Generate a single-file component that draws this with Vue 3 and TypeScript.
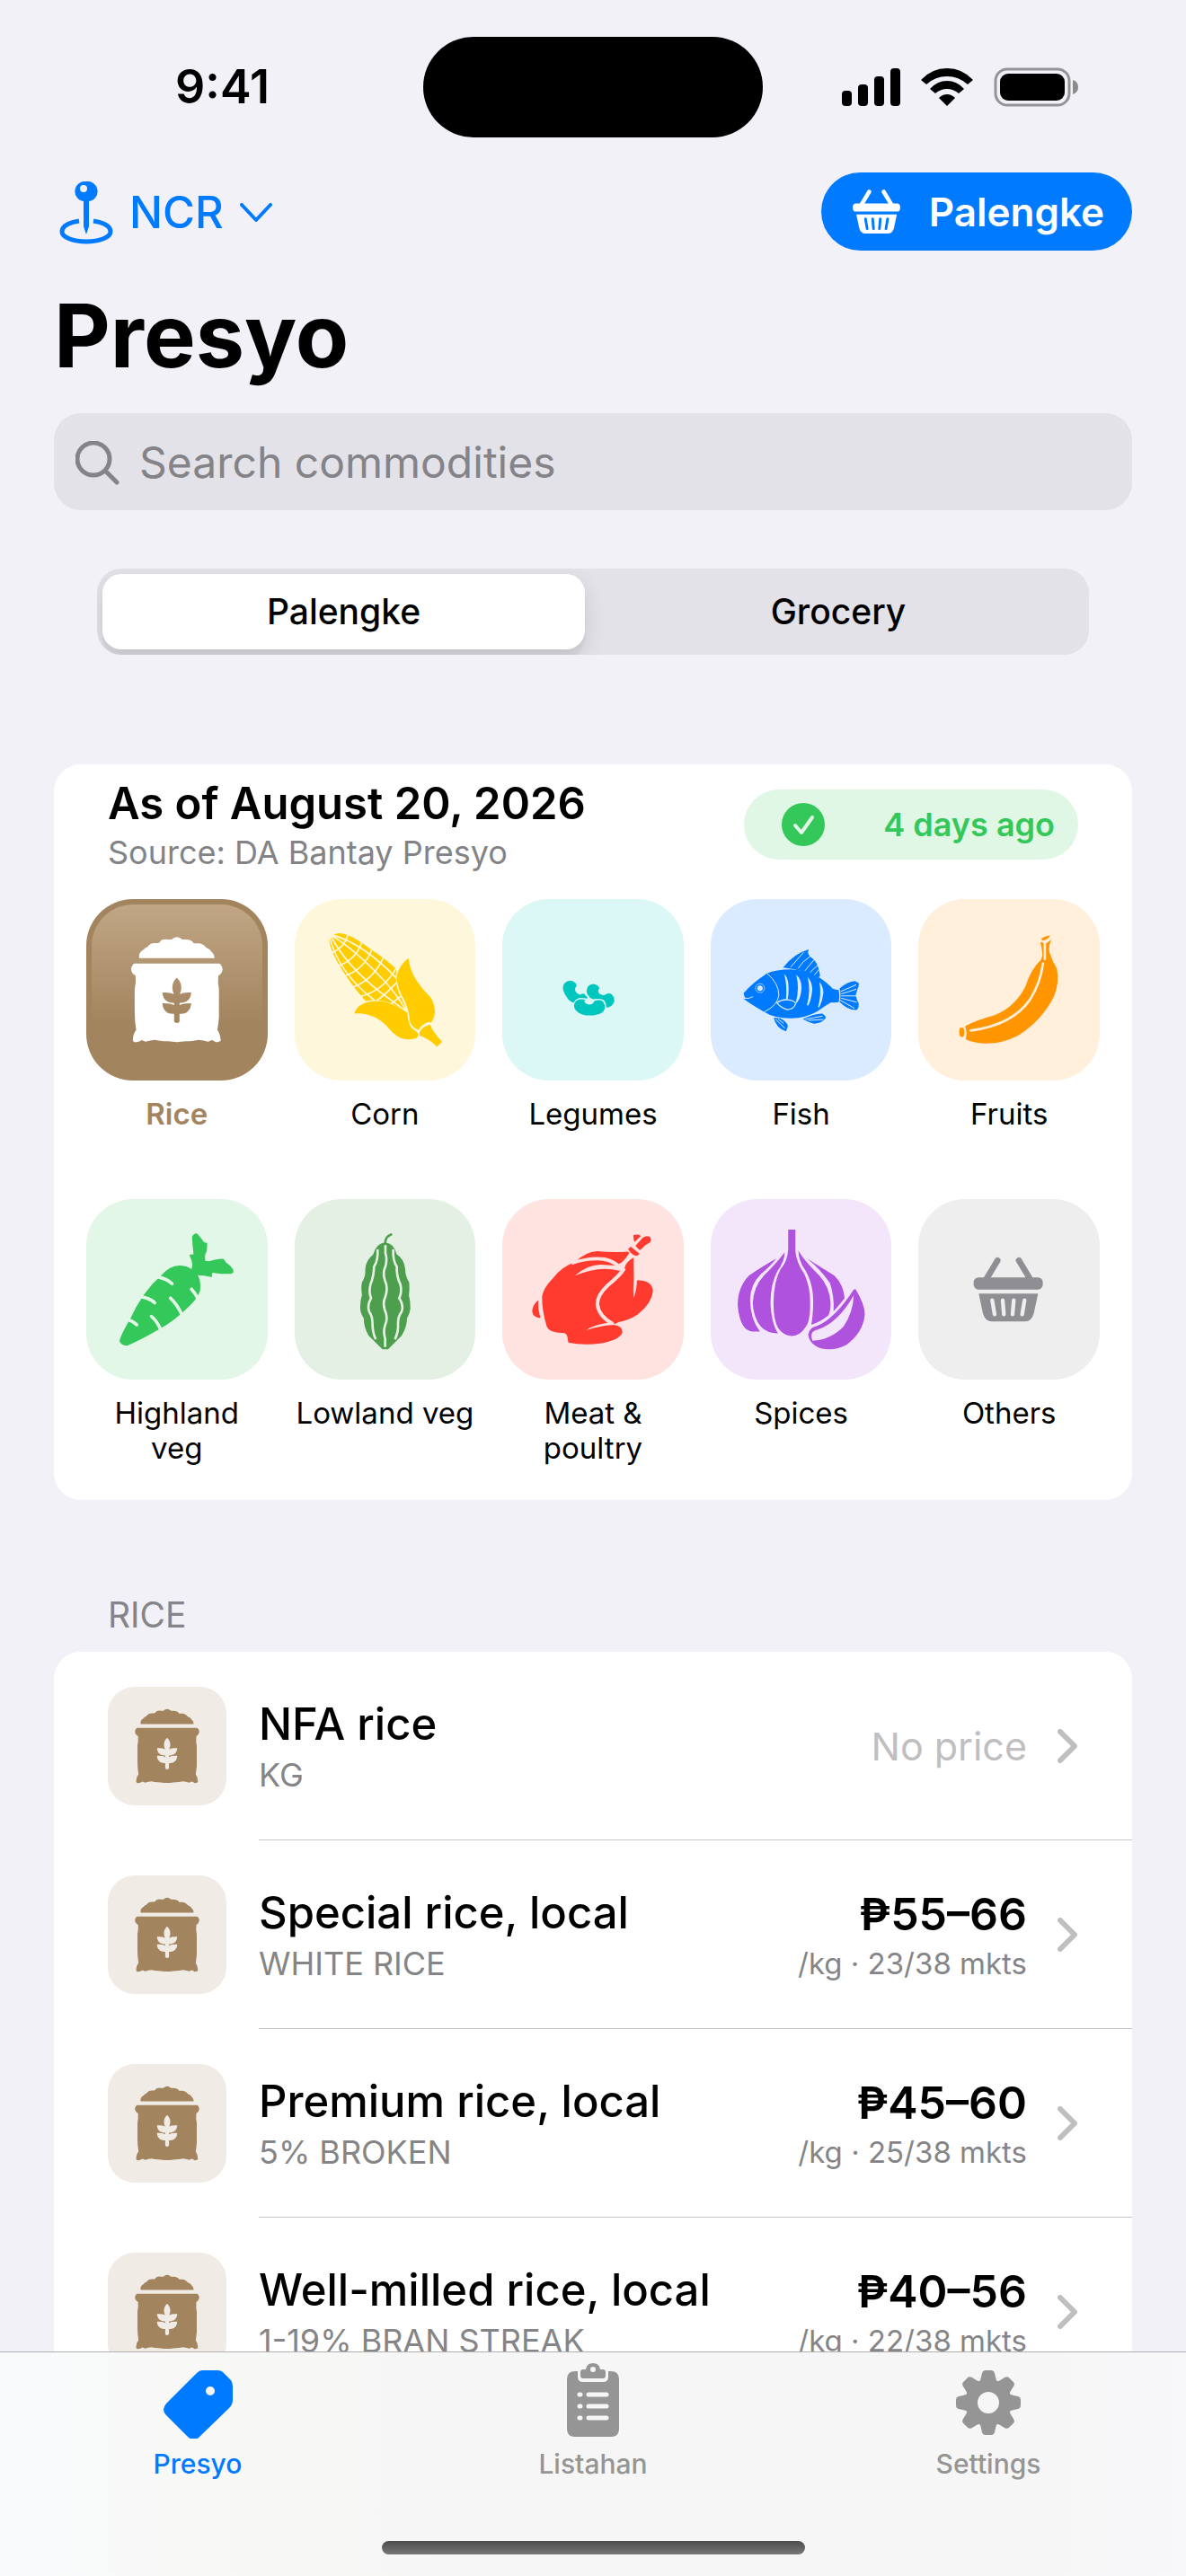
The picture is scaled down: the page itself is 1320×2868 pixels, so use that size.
<script setup lang="ts">
import { computed, ref } from 'vue'

interface Category {
  id: string
  label: string
  color: string
  tint: string
  viewBox: string
}

interface Commodity {
  name: string
  detail: string
  price?: string
  markets?: string
}

const market = ref<'palengke' | 'grocery'>('palengke')
const selected = ref('rice')
const query = ref('')

const categories: Category[] = [
  { id: 'rice', label: 'Rice', color: '#a2845e', tint: '#f0ebe5', viewBox: '48 63 606 606' },
  { id: 'corn', label: 'Corn', color: '#ffcc00', tint: '#fff7db', viewBox: '744 63 604 606' },
  { id: 'legumes', label: 'Legumes', color: '#00c7be', tint: '#dbf7f6', viewBox: '57 63 606 606' },
  { id: 'fish', label: 'Fish', color: '#007aff', tint: '#dbebff', viewBox: '753 63 604 606' },
  { id: 'fruits', label: 'Fruits', color: '#ff9500', tint: '#ffefdb', viewBox: '187 63 605 606' },
  { id: 'highland', label: 'Highland veg', color: '#34c759', tint: '#e2f7e7', viewBox: '48 75 606 603' },
  { id: 'lowland', label: 'Lowland veg', color: '#4d9e4d', tint: '#e5f0e5', viewBox: '744 75 603 603' },
  { id: 'meat', label: 'Meat & poultry', color: '#ff3b30', tint: '#ffe3e1', viewBox: '57 75 606 603' },
  { id: 'spices', label: 'Spices', color: '#af52de', tint: '#f3e6fa', viewBox: '753 75 603 603' },
  { id: 'others', label: 'Others', color: '#8e8e93', tint: '#eeeeef', viewBox: '187 75 605 603' },
]

const commodities: Commodity[] = [
  { name: 'NFA rice', detail: 'KG' },
  { name: 'Special rice, local', detail: 'WHITE RICE', price: '₱55–66', markets: '23/38' },
  { name: 'Premium rice, local', detail: '5% BROKEN', price: '₱45–60', markets: '25/38' },
  { name: 'Well-milled rice, local', detail: '1-19% BRAN STREAK', price: '₱40–56', markets: '22/38' },
]

const visible = computed(() =>
  commodities.filter((c) => c.name.toLowerCase().includes(query.value.toLowerCase())),
)

const gearTeeth = [0, 45, 90, 135, 180, 225, 270, 315]
</script>

<template>
  <div class="app">
    <svg class="defs" width="0" height="0" aria-hidden="true">
      <symbol id="sack" overflow="visible">
        <path d="M225 261V250Q228 238 240 232Q244 226 252 224Q262 210 275 210H289Q296 207 300 200Q310 197 320 198H333Q342 190 351 190Q360 190 370 198H382Q396 198 403 205L408 211H427Q441 214 450 226Q462 230 468 240Q477 248 477 261Z" />
        <path fill-rule="evenodd" d="M210 279H492Q497 279 499 285Q504 290 504 298Q503 312 490 319Q487 345 492 365V460Q490 480 487 501Q497 515 498 538L491 540Q485 543 480 541Q474 536 468 535L456 540Q440 535 424 534Q410 538 380 539Q351 544 322 539Q290 538 278 534Q262 535 246 540L234 535Q222 543 210 542L204 538Q203 515 215 501Q210 470 210 440V365Q215 340 213 319Q199 312 198 298Q198 290 203 285Q205 279 210 279ZM351 326Q366 340 366 358Q366 370 361 381Q375 374 399 376Q399 396 383 406Q372 411 360 411V418Q372 411 399 412Q399 432 383 443Q372 448 360 447V470Q360 477 351 477Q342 477 342 470V447Q330 448 319 443Q303 432 303 412Q330 411 342 418V411Q330 411 319 406Q303 396 303 376Q327 374 341 381Q336 370 336 358Q336 340 351 326Z" />
      </symbol>
      <symbol id="basket" overflow="visible">
        <path d="M452 279L414 342M523 279L561 342" fill="none" stroke="currentColor" stroke-width="20" stroke-linecap="round" />
        <rect x="372" y="336" width="231" height="40" rx="16" />
        <path d="M389 390H587L573 456Q566 483 543 483H434Q410 483 403 456Z" />
      </symbol>
    </svg>

    <div class="status">
      <span class="clock">9:41</span>
      <span class="island"></span>
      <span class="indicators">
        <svg width="65" height="42" viewBox="0 0 65 42" aria-hidden="true">
          <rect x="0" y="25" width="11" height="17" rx="4" />
          <rect x="18" y="18" width="11" height="24" rx="4" />
          <rect x="36" y="9" width="11" height="33" rx="4" />
          <rect x="54" y="0" width="11" height="42" rx="4" />
        </svg>
        <svg width="58" height="42" viewBox="0 0 58 42" aria-hidden="true">
          <path d="M0 13Q12 0 29 0T58 13L52 18Q42 9 29 9T6 18ZM10 23Q18 14 29 14T48 23L42 28Q36 23 29 23T16 28ZM20 33Q24 29 29 29T38 33L29 42Z" />
        </svg>
        <svg width="94" height="44" viewBox="0 0 94 44" aria-hidden="true">
          <rect x="2" y="2" width="82" height="40" rx="13" fill="none" stroke="#949497" stroke-width="3" />
          <rect x="7" y="7" width="72" height="30" rx="9" />
          <path d="M88 14Q94 16 94 22T88 30Z" fill="#8b8b8e" />
        </svg>
      </span>
    </div>

    <header class="top">
      <button class="region" type="button">
        <svg width="60" height="70" viewBox="0 0 60 70" aria-hidden="true">
          <path fill-rule="evenodd" d="M30 0A11 11 0 0 1 33 22V50L30 59L27 50V22A11 11 0 0 1 30 0ZM27 4A4 4 0 1 0 27 12A4 4 0 1 0 27 4Z" />
          <path d="M22 44C10 46 3 50 3 56C3 62 15 67 30 67S57 62 57 56C57 50 50 46 38 44" fill="none" stroke="currentColor" stroke-width="5" />
        </svg>
        <span>NCR</span>
        <svg width="36" height="22" viewBox="0 0 36 22" aria-hidden="true">
          <path d="M2 2L18 19L34 2" fill="none" stroke="currentColor" stroke-width="4" stroke-linecap="round" stroke-linejoin="round" />
        </svg>
      </button>
      <button class="market" type="button">
        <svg width="53" height="49" viewBox="372 268 231 215" aria-hidden="true">
          <use href="#basket" />
          <path class="slots blue" d="M434 412L442 459M469 412L473 459M506 412L502 459M542 412L534 459" />
        </svg>
        <span>Palengke</span>
      </button>
    </header>

    <h1>Presyo</h1>

    <label class="search">
      <svg width="49" height="49" viewBox="0 0 49 49" aria-hidden="true">
        <path d="M20 2A18 18 0 1 0 20 38A18 18 0 1 0 20 2M33 33L46 46" fill="none" stroke="currentColor" stroke-width="5" stroke-linecap="round" />
      </svg>
      <input v-model="query" type="text" placeholder="Search commodities" aria-label="Search commodities" />
    </label>

    <main>
      <div class="segments" role="radiogroup" aria-label="Market type">
        <label :class="{ on: market === 'palengke' }">
          <input v-model="market" type="radio" name="market" value="palengke" />Palengke
        </label>
        <label :class="{ on: market === 'grocery' }">
          <input v-model="market" type="radio" name="market" value="grocery" />Grocery
        </label>
      </div>

      <section class="card overview">
        <div class="summary">
          <div>
            <h2>As of August 20, 2026</h2>
            <p>Source: DA Bantay Presyo</p>
          </div>
          <span class="fresh">
            <svg width="48" height="48" viewBox="0 0 48 48" aria-hidden="true">
              <circle cx="24" cy="24" r="24" fill="#34c759" />
              <path d="M15 25L22 33L34 16" fill="none" stroke="#e1f7e6" stroke-width="4" stroke-linecap="round" stroke-linejoin="round" />
            </svg>
            <span>4 days ago</span>
          </span>
        </div>

        <div class="grid">
          <button
            v-for="c in categories"
            :key="c.id"
            type="button"
            class="category"
            :class="{ active: selected === c.id }"
            :style="{ '--ink': c.color, '--tint': c.tint }"
            @click="selected = c.id"
          >
            <span class="tile">
              <svg :viewBox="c.viewBox" aria-hidden="true">
                <use v-if="c.id === 'rice'" href="#sack" />

                <g v-else-if="c.id === 'corn'">
                  <path d="M858 203Q862 180 890 177Q925 176 990 225Q1050 265 1083 297Q1075 350 1100 395Q1112 415 1118 440Q1090 425 1065 412Q1020 395 980 404Q940 360 905 305Q865 245 858 203Z" />
                  <path class="cut w5" d="M868 183Q970 210 1086 330M866 185Q950 235 1050 345Q1090 390 1118 440M864 187Q915 285 1030 375L1118 440M860 192Q890 310 1010 402M921 183Q910 225 866 243M968 205Q950 265 886 288M1002 230Q975 300 910 320M1040 258Q1005 335 936 358M1084 292Q1040 370 965 388M1086 340Q1050 380 1016 404M1102 385L1065 414" />
                  <path d="M1124 261Q1127 300 1150 335Q1170 365 1200 395Q1215 425 1211 450Q1208 465 1200 476Q1185 472 1172 484Q1160 492 1158 502Q1130 490 1127 465Q1128 445 1112 405Q1085 360 1084 325Q1090 285 1124 261Z" />
                  <path d="M942 446Q955 405 1020 404Q1060 404 1120 443Q1122 480 1135 495Q1150 505 1157 514Q1157 524 1150 528Q1120 538 1095 527Q1075 518 1050 487Q1005 442 942 446Z" />
                  <path d="M1161 509Q1170 488 1196 483Q1200 500 1236 541L1219 557Q1195 532 1161 520Z" />
                </g>

                <g v-else-if="c.id === 'legumes'">
                  <path d="M260 358Q262 338 285 336Q305 340 306 354Q298 362 302 372Q308 382 318 384Q322 377 331 380L342 392V396Q325 393 315 394Q302 398 295 410Q280 405 272 390Q260 372 260 358Z" />
                  <path d="M339 372Q340 348 362 347Q380 350 382 362Q374 370 382 380Q392 386 400 384Q412 374 425 383Q434 394 432 405Q425 425 405 427Q405 408 395 400Q378 394 362 398Q350 396 347 388Q340 382 339 372Z" />
                  <path d="M297 418Q300 400 318 398Q335 398 334 402Q331 405 332 408Q336 415 348 416Q361 416 365 404Q380 398 392 404Q402 415 400 430Q393 448 375 449Q350 456 325 449Q296 440 297 418Z" />
                </g>

                <g v-else-if="c.id === 'fish'">
                  <path d="M862 378Q890 345 940 312Q970 298 1020 298Q1080 302 1120 328Q1150 350 1160 363Q1170 367 1180 367Q1185 385 1180 408Q1165 410 1155 409Q1135 420 1110 438Q1070 462 1020 462Q965 462 930 440Q890 418 862 397L868 394Q864 390 862 378Z" />
                  <path d="M994 292Q1030 245 1080 231L1077 242L1083 255Q1112 270 1118 320L1112 326Q1060 298 994 292Z" />
                  <path d="M963 460L985 462Q1010 475 1010 490L1004 506Q970 495 963 460ZM1060 464Q1100 445 1125 446Q1140 455 1136 462Q1125 478 1098 480Q1080 476 1060 464Z" />
                  <path d="M1183 362Q1210 338 1235 337L1248 345Q1248 355 1243 365L1237 385Q1240 400 1247 412Q1248 430 1240 434Q1210 435 1183 407Q1190 385 1183 362Z" />
                  <path class="cut w3" d="M942 313Q980 345 980 385Q975 420 932 440M864 395Q880 398 893 390M1020 290L1062 242M1045 294Q1060 270 1083 256M1068 302L1098 266M1085 308L1110 284M1100 316L1115 298M970 466L1000 495M978 465L995 478M1070 465L1125 455M1080 469L1128 466M1188 372L1238 350M1190 380L1238 365M1190 387H1238M1190 395L1240 408M1186 402L1232 428M980 411L1026 413M984 413L1022 423" />
                  <path class="gap" d="M998 314Q1010 325 1012 350Q1014 380 1009 400L1004 398Q1008 350 998 314ZM1038 316Q1056 330 1056 360Q1054 395 1040 410L1037 408Q1050 360 1038 316ZM1076 324Q1091 340 1092 365Q1089 400 1078 420L1074 418Q1088 370 1076 324ZM1116 340Q1129 355 1129 378Q1126 405 1115 426L1111 424Q1123 385 1116 340Z" />
                  <path class="knock" d="M973 410Q990 398 1010 400Q1030 402 1037 412Q1030 432 1008 433Q988 428 973 410Z" />
                  <circle class="knock" cx="917" cy="361" r="15" />
                  <circle class="gap" cx="917" cy="361" r="9" />
                </g>

                <g v-else-if="c.id === 'fruits'">
                  <path d="M343 488Q380 468 440 452Q510 425 545 355Q565 295 598 265L602 250Q600 225 595 208Q600 205 606 211H615L632 198Q622 220 625 240Q635 270 650 295Q660 340 640 390Q600 470 520 520Q465 548 410 546Q370 545 345 532Q352 510 343 488Z" />
                  <path class="cut w8" d="M604 278Q595 345 560 400Q500 485 362 503" />
                  <path class="cut w8" d="M610 205V264" />
                  <path d="M325 495Q332 490 338 495Q343 510 338 522Q332 528 325 520Q322 508 325 495ZM597 198Q605 187 628 185Q622 198 605 202Z" />
                </g>

                <g v-else-if="c.id === 'highland'">
                  <path d="M298 330Q325 297 360 296Q385 296 400 308Q405 295 400 278L393 260L407 258Q403 225 402 200Q410 185 420 190L437 210Q440 220 452 220Q455 245 445 262L446 280L460 282Q490 272 508 274L516 286Q530 295 540 310V320L532 324H500L470 320L468 335Q440 328 421 328Q432 345 429 380Q420 405 395 430Q340 485 290 510Q230 545 185 564Q165 565 159 548Q165 525 195 475Q235 385 298 330Z" />
                  <path class="cut w10" d="M286 334Q318 340 335 357M230 400Q262 405 277 421M186 476Q205 482 217 494M400 375Q412 388 424 410M330 405Q352 425 370 464M266 466Q284 480 299 514" />
                </g>

                <g v-else-if="c.id === 'lowland'">
                  <path d="M1045 219Q1075 222 1083 258Q1110 275 1112 310Q1113 335 1125 352Q1127 380 1124 395Q1130 415 1129 440Q1128 455 1118 472Q1118 500 1100 530L1055 575H1036L990 530Q973 500 974 472Q962 455 962 435Q962 412 968 395Q964 370 968 352Q980 335 979 310Q980 280 1005 260Q1015 222 1045 219Z" />
                  <path d="M1045 222Q1045 200 1065 193" fill="none" stroke="currentColor" stroke-width="8" stroke-linecap="round" />
                  <path class="cut w8 butt" d="M1046 228V255Q1053 275 1046 300Q1036 320 1044 345Q1056 370 1046 400Q1036 420 1044 445Q1056 470 1045 495Q1038 515 1045 540V568M1020 242Q1022 280 1008 300Q1008 330 996 360Q990 385 998 405Q984 430 992 450Q1003 465 1003 490Q1003 520 1014 542M1072 242Q1070 280 1084 300Q1082 330 1096 360Q1102 385 1092 405Q1108 430 1100 450Q1088 465 1088 490Q1090 515 1078 542" />
                </g>

                <g v-else-if="c.id === 'meat'">
                  <path d="M190 400Q195 370 225 340Q255 300 300 285Q335 250 375 248Q430 253 478 249L488 260L497 272Q494 310 505 345Q560 345 561 382Q558 420 510 460Q480 480 445 485L430 494Q460 498 459 520Q450 545 390 556Q330 565 278 554L275 535Q272 522 262 521Q215 522 206 500Q190 450 190 400Z" />
                  <path class="cut w12 butt" d="M465 305Q455 325 410 362Q375 395 375 425Q380 465 425 490" />
                  <path class="gap" d="M290 284Q345 262 400 269Q430 276 447 291Q465 283 482 254L500 268Q480 276 470 294Q465 315 448 313Q380 295 300 330Q340 294 385 293L434 296Q410 280 375 279Q330 279 290 294ZM337 512Q370 490 430 486L433 494Q390 496 337 512ZM497 270L499 310L508 345Q506 380 497 405Q494 380 497 345Z" />
                  <path d="M178 412Q175 440 185 472Q158 470 157 448Q160 425 178 412ZM496 194Q510 190 521 197L500 217Q495 210 496 194ZM527 203Q540 193 552 201Q560 215 545 222L533 230Q522 243 517 244Q505 235 503 229ZM478 240L487 233L516 256Q512 265 500 262Q488 258 478 240Z" />
                </g>

                <g v-else-if="c.id === 'spices'">
                  <path d="M1011 177H1035V250Q1040 290 1065 325Q1085 370 1084 420Q1085 480 1070 500Q1050 531 1023 531Q995 530 978 505Q962 480 962 420Q963 350 985 310Q1010 280 1011 240Z" />
                  <path d="M999 252Q1000 280 975 315Q953 355 952 420Q955 490 977 522Q940 522 920 500Q895 470 893 420Q897 365 930 330Q975 285 999 252ZM971 273Q955 295 920 325Q885 360 884 410Q885 475 917 516H890Q850 510 843 430Q842 370 880 330Q920 302 971 273Z" />
                  <path d="M1045 246Q1060 275 1115 330Q1150 370 1152 420Q1153 445 1145 462Q1120 482 1088 494Q1097 440 1093 390Q1088 345 1068 312Q1045 280 1045 246ZM1074 273Q1120 302 1165 330Q1195 360 1199 405Q1180 430 1162 449Q1165 400 1150 355Q1120 310 1074 273Z" />
                  <path fill-rule="evenodd" d="M1229 376L1235 375Q1266 425 1266 460Q1260 520 1205 560Q1165 582 1120 572Q1080 558 1078 525Q1082 502 1105 498Q1165 475 1229 376ZM1229 396Q1228 450 1195 500Q1150 545 1092 547Q1080 515 1108 510Q1175 490 1229 396Z" />
                </g>

                <g v-else>
                  <use href="#basket" />
                  <path class="slots" d="M434 412L442 459M469 412L473 459M506 412L502 459M542 412L534 459" />
                </g>
              </svg>
            </span>
            <span class="name">{{ c.label }}</span>
          </button>
        </div>
      </section>

      <h3>RICE</h3>
      <ul class="card list">
        <li v-for="item in visible" :key="item.name">
          <a href="#">
            <span class="thumb">
              <svg viewBox="69 84 564 564" aria-hidden="true"><use href="#sack" /></svg>
            </span>
            <span class="row">
              <span class="what">
                <span class="title">{{ item.name }}</span>
                <span class="detail">{{ item.detail }}</span>
              </span>
              <span v-if="item.price" class="cost">
                <span class="price">{{ item.price }}</span>
                <span class="markets">/kg · {{ item.markets }} mkts</span>
              </span>
              <span v-else class="none">No price</span>
              <svg class="chevron" width="22" height="38" viewBox="0 0 22 38" aria-hidden="true">
                <path d="M3 3L19 19L3 35" fill="none" stroke="#bfbfc1" stroke-width="6" stroke-linecap="round" stroke-linejoin="round" />
              </svg>
            </span>
          </a>
        </li>
      </ul>
    </main>

    <nav class="tabs" aria-label="Main">
      <div class="links">
        <a href="#" class="current" aria-current="page">
          <svg width="77" height="84" viewBox="0 -8 77 84" aria-hidden="true">
            <path fill-rule="evenodd" d="M43 0H60Q64 0 66 2L75 11Q77 14 77 18V33Q77 38 73 42L39 75Q33 80 27 74L3 50Q-3 44 3 37L37 3Q40 0 43 0ZM52 18A5 5 0 1 0 52 28A5 5 0 1 0 52 18Z" />
          </svg>
          <span>Presyo</span>
        </a>
        <a href="#">
          <svg width="58" height="84" viewBox="0 0 58 84" aria-hidden="true">
            <path d="M9 9H12V15Q12 21 18 21H40Q46 21 46 15V9H49Q58 9 58 18V73Q58 82 49 82H9Q0 82 0 73V18Q0 9 9 9Z" />
            <path fill-rule="evenodd" d="M18 7H21Q22 0 29 0T37 7H40Q43 7 43 10V14Q43 17 40 17H18Q15 17 15 14V10Q15 7 18 7ZM29 4A3 3 0 1 0 29 10A3 3 0 1 0 29 4Z" />
            <path d="M14 35H15M14 48H15M14 61H15M24 35H44M24 48H44M24 61H44" fill="none" stroke="#f6f6f6" stroke-width="5" stroke-linecap="round" />
          </svg>
          <span>Listahan</span>
        </a>
        <a href="#">
          <svg width="72" height="84" viewBox="0 -8 72 84" aria-hidden="true">
            <path
              v-for="angle in gearTeeth"
              :key="angle"
              :transform="`rotate(${angle} 36 36)`"
              d="M26 14Q28 9 29 3Q30 0 33 0H39Q42 0 43 3Q44 9 46 14Z"
            />
            <circle cx="36" cy="36" r="19" fill="none" stroke="currentColor" stroke-width="14" />
          </svg>
          <span>Settings</span>
        </a>
      </div>
      <span class="home"></span>
    </nav>
  </div>
</template>

<style>
body {
  margin: 0;
  background: #f2f1f7;
}
</style>

<style scoped>
.app {
  box-sizing: border-box;
  display: flex;
  flex-direction: column;
  height: 100vh;
  overflow: hidden;
  background: #f2f1f7;
  color: #000;
  font-family: Inter, 'Liberation Sans', sans-serif;
}

.app * {
  box-sizing: border-box;
}

.defs {
  position: absolute;
}

svg {
  display: block;
  flex: none;
  fill: currentColor;
}

button {
  padding: 0;
  border: 0;
  background: none;
  font: inherit;
  color: inherit;
}

a {
  color: inherit;
  text-decoration: none;
}

h1,
h2,
h3,
p,
ul {
  margin: 0;
  padding: 0;
}

.status {
  display: grid;
  grid-template-columns: 1fr 378px 1fr;
  align-items: center;
  padding: 41px 0 39px;
}

.clock {
  font-size: 52px;
  line-height: 60px;
  font-weight: 600;
  text-align: center;
  padding-left: 24px;
}

.island {
  height: 112px;
  border-radius: 56px;
  background: #000;
}

.indicators {
  display: flex;
  align-items: center;
  justify-content: center;
  gap: 23px;
  padding-right: 32px;
}

.top {
  display: flex;
  justify-content: space-between;
  align-items: center;
  padding: 0 60px;
}

.region {
  display: flex;
  align-items: center;
  padding: 3px 0 0 6px;
  color: #007aff;
  font-size: 49px;
  line-height: 60px;
  font-weight: 500;
}

.region span {
  margin: 0 18px;
}

.market {
  display: flex;
  align-items: center;
  gap: 32px;
  height: 87px;
  padding: 0 31px 0 35px;
  border-radius: 44px;
  background: #007aff;
  color: #fff;
  font-size: 44px;
  line-height: 54px;
  font-weight: 600;
}

.slots {
  fill: none;
  stroke: var(--tint);
  stroke-width: 13px;
  stroke-linecap: round;
}

.slots.blue {
  stroke: #007aff;
}

h1 {
  margin: 35px 60px 26px;
  font-size: 97px;
  line-height: 120px;
  font-weight: 700;
}

.search {
  display: flex;
  align-items: center;
  flex: none;
  gap: 22px;
  height: 108px;
  margin: 0 60px;
  padding: 2px 24px 0;
  border-radius: 30px;
  background: #e3e2e8;
  color: #838388;
}

.search input {
  flex: 1;
  min-width: 0;
  padding: 0;
  border: 0;
  outline: 0;
  background: none;
  color: #000;
  font: 400 48px/60px Inter, 'Liberation Sans', sans-serif;
}

.search input::placeholder {
  color: #838388;
  opacity: 1;
}

main {
  flex: 1;
  min-height: 0;
  padding: 65px 60px 0;
  overflow-y: auto;
  scrollbar-width: none;
}

.segments {
  display: grid;
  grid-template-columns: 1fr 1fr;
  height: 96px;
  margin: 0 48px 122px;
  padding: 6px;
  border-radius: 27px;
  background: #e3e2e8;
  overflow: hidden;
}

.segments label {
  display: flex;
  align-items: center;
  justify-content: center;
  border-radius: 21px;
  font-size: 39px;
  line-height: 48px;
  font-weight: 500;
}

.segments .on {
  background: #fff;
  margin-right: 9px;
  box-shadow: 0 9px 24px rgba(0, 0, 0, 0.12), 0 9px 3px rgba(0, 0, 0, 0.04);
}

.segments input {
  position: absolute;
  opacity: 0;
  pointer-events: none;
}

.card {
  border-radius: 30px;
  background: #fff;
}

.overview {
  padding: 14px 36px 38px;
}

.summary {
  display: flex;
  justify-content: space-between;
  align-items: center;
  padding: 0 24px;
}

h2 {
  font-size: 49px;
  line-height: 60px;
  font-weight: 600;
}

.summary p {
  margin-top: 2px;
  color: #838387;
  font-size: 36px;
  line-height: 44px;
}

.fresh {
  display: flex;
  align-items: center;
  justify-content: space-between;
  width: 372px;
  height: 78px;
  padding: 0 26px 0 42px;
  border-radius: 39px;
  background: #e1f7e6;
  color: #34c759;
  font-size: 36px;
  line-height: 44px;
  font-weight: 600;
}

.grid {
  display: grid;
  grid-template-columns: repeat(5, 1fr);
  gap: 36px 30px;
  margin-top: 30px;
}

.category {
  display: flex;
  flex-direction: column;
  align-items: center;
  gap: 18px;
  min-width: 0;
}

.tile {
  width: 100%;
  aspect-ratio: 1;
  border-radius: 52px;
  background: var(--tint);
  color: var(--ink);
  overflow: hidden;
}

.tile svg {
  width: 100%;
  height: 100%;
}

.active .tile {
  color: #fff;
  background:
    linear-gradient(#c1a685, #a2845e 70%) padding-box,
    var(--ink) border-box;
  border: 6px solid transparent;
}

.active .tile svg {
  width: calc(100% + 12px);
  height: calc(100% + 12px);
  margin: -6px;
}

.name {
  min-height: 78px;
  font-size: 33px;
  line-height: 39px;
  text-align: center;
}

.active .name {
  color: var(--ink);
  font-weight: 600;
}

.cut {
  fill: none;
  stroke: var(--tint);
  stroke-linecap: round;
}

.butt {
  stroke-linecap: butt;
}

.gap {
  fill: var(--tint);
}

.knock {
  stroke: var(--tint);
  stroke-width: 4px;
}

circle.knock {
  stroke-width: 2px;
}

.w3 {
  stroke-width: 3px;
}

.w5 {
  stroke-width: 5px;
}

.w8 {
  stroke-width: 8px;
}

.w10 {
  stroke-width: 11px;
}

.w12 {
  stroke-width: 12px;
}

h3 {
  margin: 104px 60px 17px;
  color: #858489;
  font-size: 39px;
  line-height: 48px;
  font-weight: 400;
}

.list {
  list-style: none;
}

.list a {
  display: flex;
  align-items: center;
  gap: 36px;
  height: 210px;
  padding-left: 60px;
}

.thumb {
  flex: none;
  width: 132px;
  height: 132px;
  border-radius: 30px;
  background: #f0ebe5;
  color: #a2845e;
}

.row {
  display: flex;
  flex: 1;
  align-items: center;
  height: 100%;
  padding-right: 61px;
  border-bottom: 1px solid #c6c6c8;
}

.what {
  display: flex;
  flex: 1;
  flex-direction: column;
  gap: 4px;
}

.title {
  font-size: 49px;
  line-height: 60px;
  font-weight: 500;
}

.detail {
  color: #858587;
  font-size: 36px;
  line-height: 44px;
}

.cost {
  display: flex;
  flex-direction: column;
  align-items: flex-end;
  gap: 4px;
}

.price {
  font-size: 50px;
  line-height: 60px;
  font-weight: 600;
}

.markets {
  color: #858587;
  font-size: 33px;
  line-height: 42px;
}

.none {
  color: #bfbfc1;
  font-size: 43px;
  line-height: 54px;
}

.chevron {
  margin-left: 34px;
}

.tabs {
  display: flex;
  flex: none;
  flex-direction: column;
  align-items: center;
  height: 250px;
  padding: 12px 0 24px;
  border-top: 1px solid #b0b0b3;
  background: linear-gradient(90deg, #f8fafc, #f8f8f6 17%, #f6f6f6 40%, #f6f6f6 85%, #f8f8fb);
}

.links {
  display: grid;
  grid-template-columns: repeat(3, 1fr);
  width: 100%;
  color: #949594;
}

.links a {
  display: flex;
  flex-direction: column;
  align-items: center;
  gap: 10px;
  font-size: 30px;
  line-height: 36px;
  font-weight: 500;
}

.links .current {
  color: #007aff;
}

.home {
  width: 471px;
  height: 15px;
  margin-top: auto;
  border-radius: 8px;
  background: linear-gradient(#4d4d4d, #777);
}
</style>
